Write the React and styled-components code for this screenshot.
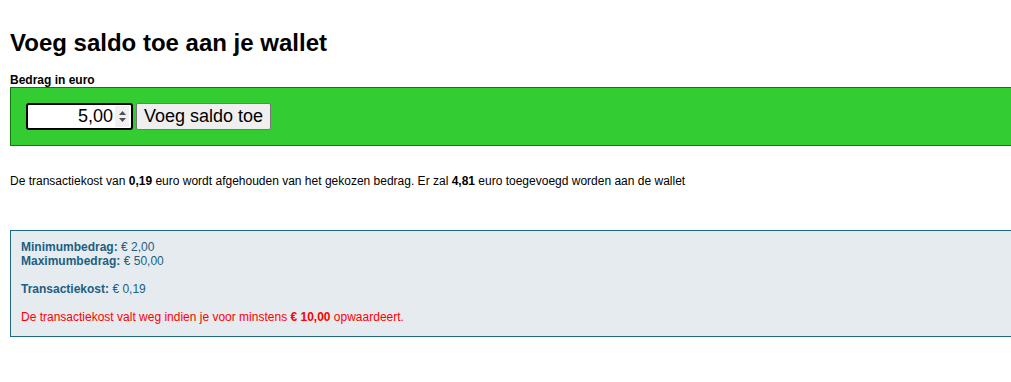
import React from 'react';
import styled, { createGlobalStyle } from 'styled-components';

const Global = createGlobalStyle`
  html, body {
    margin: 0;
    padding: 0;
    overflow: hidden;
    background: #fff;
    font-family: "Liberation Sans", Arial, sans-serif;
  }
`;

const Page = styled.div`
  padding: 0 0 0 10px;
  width: 1001px;
`;

const Title = styled.h1`
  font-size: 24px;
  font-weight: 700;
  line-height: 28px;
  margin: 29px 0 0;
  color: #000;
`;

const Label = styled.label`
  display: block;
  font-size: 12px;
  font-weight: 700;
  line-height: 14px;
  margin-top: 16px;
  color: #000;
`;

const GreenBar = styled.div`
  display: flex;
  align-items: center;
  gap: 3px;
  height: 59px;
  width: 1020px;
  box-sizing: border-box;
  padding: 0 15px;
  background: #33cc33;
  border: 1px solid #0a7d0a;
`;

const AmountField = styled.div`
  display: flex;
  align-items: center;
  width: 107px;
  height: 27px;
  box-sizing: border-box;
  background: #fff;
  border: 2px solid #000;
  border-radius: 3px;
  padding: 0 2px 0 4px;
`;

const AmountInput = styled.input`
  flex: 1;
  min-width: 0;
  border: none;
  outline: none;
  padding: 0 2px 0 0;
  text-align: right;
  font-family: "Liberation Sans", Arial, sans-serif;
  font-size: 18px;
  color: #000;
  background: transparent;
`;

const Spinner = styled.div`
  width: 14px;
  height: 21px;
  background: #f0f0f0;
  display: flex;
  align-items: center;
  justify-content: center;
`;

const Button = styled.button`
  height: 27px;
  padding: 0 7px;
  font-family: "Liberation Sans", Arial, sans-serif;
  font-size: 18px;
  color: #000;
  background: #efefef;
  border: 1px solid #767676;
  border-radius: 2px;
`;

const Note = styled.p`
  font-size: 12px;
  line-height: 14px;
  margin: 28px 0 0;
  color: #000;
`;

const InfoBox = styled.div`
  margin-top: 42px;
  width: 1020px;
  box-sizing: border-box;
  background: #e6ebf0;
  border: 1px solid #1d6a85;
  padding: 9px 10px 12px;
  font-size: 12px;
  line-height: 14px;
  color: #1c5f80;
`;

const Line = styled.div`
  min-height: 14px;
  color: ${({ $warn }) => ($warn ? '#ff0000' : 'inherit')};
`;

export default function App() {
  return (
    <Page>
      <Global />
      <Title>Voeg saldo toe aan je wallet</Title>
      <Label htmlFor="bedrag">Bedrag in euro</Label>
      <GreenBar>
        <AmountField>
          <AmountInput id="bedrag" type="text" defaultValue="5,00" />
          <Spinner>
            <svg width="9" height="15" viewBox="0 0 9 15">
              <path d="M1 6 L4.5 2 L8 6 Z" fill="#505050" />
              <path d="M1 9 L4.5 13 L8 9 Z" fill="#505050" />
            </svg>
          </Spinner>
        </AmountField>
        <Button>Voeg saldo toe</Button>
      </GreenBar>
      <Note>
        De transactiekost van <b>0,19</b> euro wordt afgehouden van het gekozen bedrag. Er zal <b>4,81</b> euro toegevoegd worden aan de wallet
      </Note>
      <InfoBox>
        <Line><b>Minimumbedrag:</b> € 2,00</Line>
        <Line><b>Maximumbedrag:</b> € 50,00</Line>
        <Line />
        <Line><b>Transactiekost:</b> € 0,19</Line>
        <Line />
        <Line $warn>De transactiekost valt weg indien je voor minstens <b>€ 10,00</b> opwaardeert.</Line>
      </InfoBox>
    </Page>
  );
}
